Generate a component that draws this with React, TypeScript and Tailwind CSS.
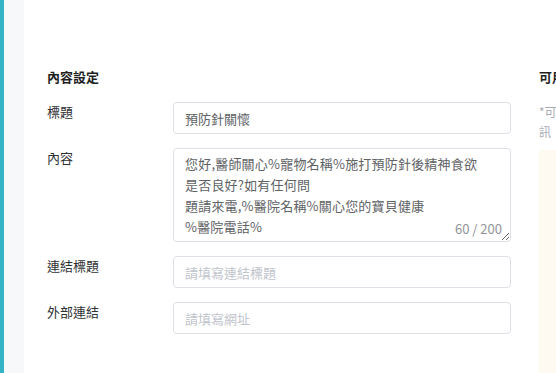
const FONT = '"Noto Sans CJK TC", "Noto Sans", sans-serif';

interface FieldRowProps {
  label: string;
  children: React.ReactNode;
}

function FieldRow({ label, children }: FieldRowProps) {
  return (
    <div className="flex">
      <div className="w-[126px] shrink-0 text-[13px] leading-[20px] text-[#303133]">{label}</div>
      <div className="flex-1">{children}</div>
    </div>
  );
}

const inputClass =
  "block h-[32px] w-full rounded-[4px] border border-[#dcdfe6] bg-white px-[11px] text-[13px] text-[#606266] outline-none placeholder:text-[#c0c4cc]";

const CONTENT =
  "您好,醫師關心%寵物名稱%施打預防針後精神食欲\n是否良好?如有任何問\n題請來電,%醫院名稱%關心您的寶貝健康\n%醫院電話%";

export default function App() {
  return (
    <div className="flex h-[373px] w-[556px] overflow-hidden bg-white" style={{ fontFamily: FONT }}>
      <div className="w-[4px] shrink-0 bg-[#33b3c3]" />
      <div className="w-[20px] shrink-0 bg-[#f6f8fa]" />
      <div className="flex flex-1 gap-[28px] pl-[23px] pt-[67px]">
        <section className="w-[464px] shrink-0">
          <h3 className="mb-[15px] text-[13px] font-bold leading-[20px] text-[#1f1f1f]">內容設定</h3>
          <div className="flex flex-col gap-[14px]">
            <FieldRow label="標題">
              <input className={inputClass} defaultValue="預防針關懷" />
            </FieldRow>
            <FieldRow label="內容">
              <div className="relative">
                <textarea
                  className="block h-[94px] w-full rounded-[4px] border border-[#dcdfe6] bg-white px-[11px] py-[4px] text-[13px] leading-[21px] tracking-[0.2px] text-[#606266] outline-none"
                  defaultValue={CONTENT}
                />
                <span className="absolute bottom-[4px] right-[9px] text-[13px] leading-[18px] text-[#909399]">
                  60 / 200
                </span>
              </div>
            </FieldRow>
            <FieldRow label="連結標題">
              <input className={inputClass} placeholder="請填寫連結標題" />
            </FieldRow>
            <FieldRow label="外部連結">
              <input className={inputClass} placeholder="請填寫網址" />
            </FieldRow>
          </div>
        </section>
        <aside className="w-[240px] shrink-0">
          <h3 className="mb-[15px] whitespace-nowrap text-[13px] font-bold leading-[20px] text-[#1f1f1f]">可用變數</h3>
          <p className="mb-[8px] text-[12px] leading-[20px] text-[#a8abb2]">
            *可使用下列變數帶入對應資
            <br />
            訊
          </p>
          <div className="h-[300px] rounded-[4px] bg-[#fffaf1]" />
        </aside>
      </div>
    </div>
  );
}
